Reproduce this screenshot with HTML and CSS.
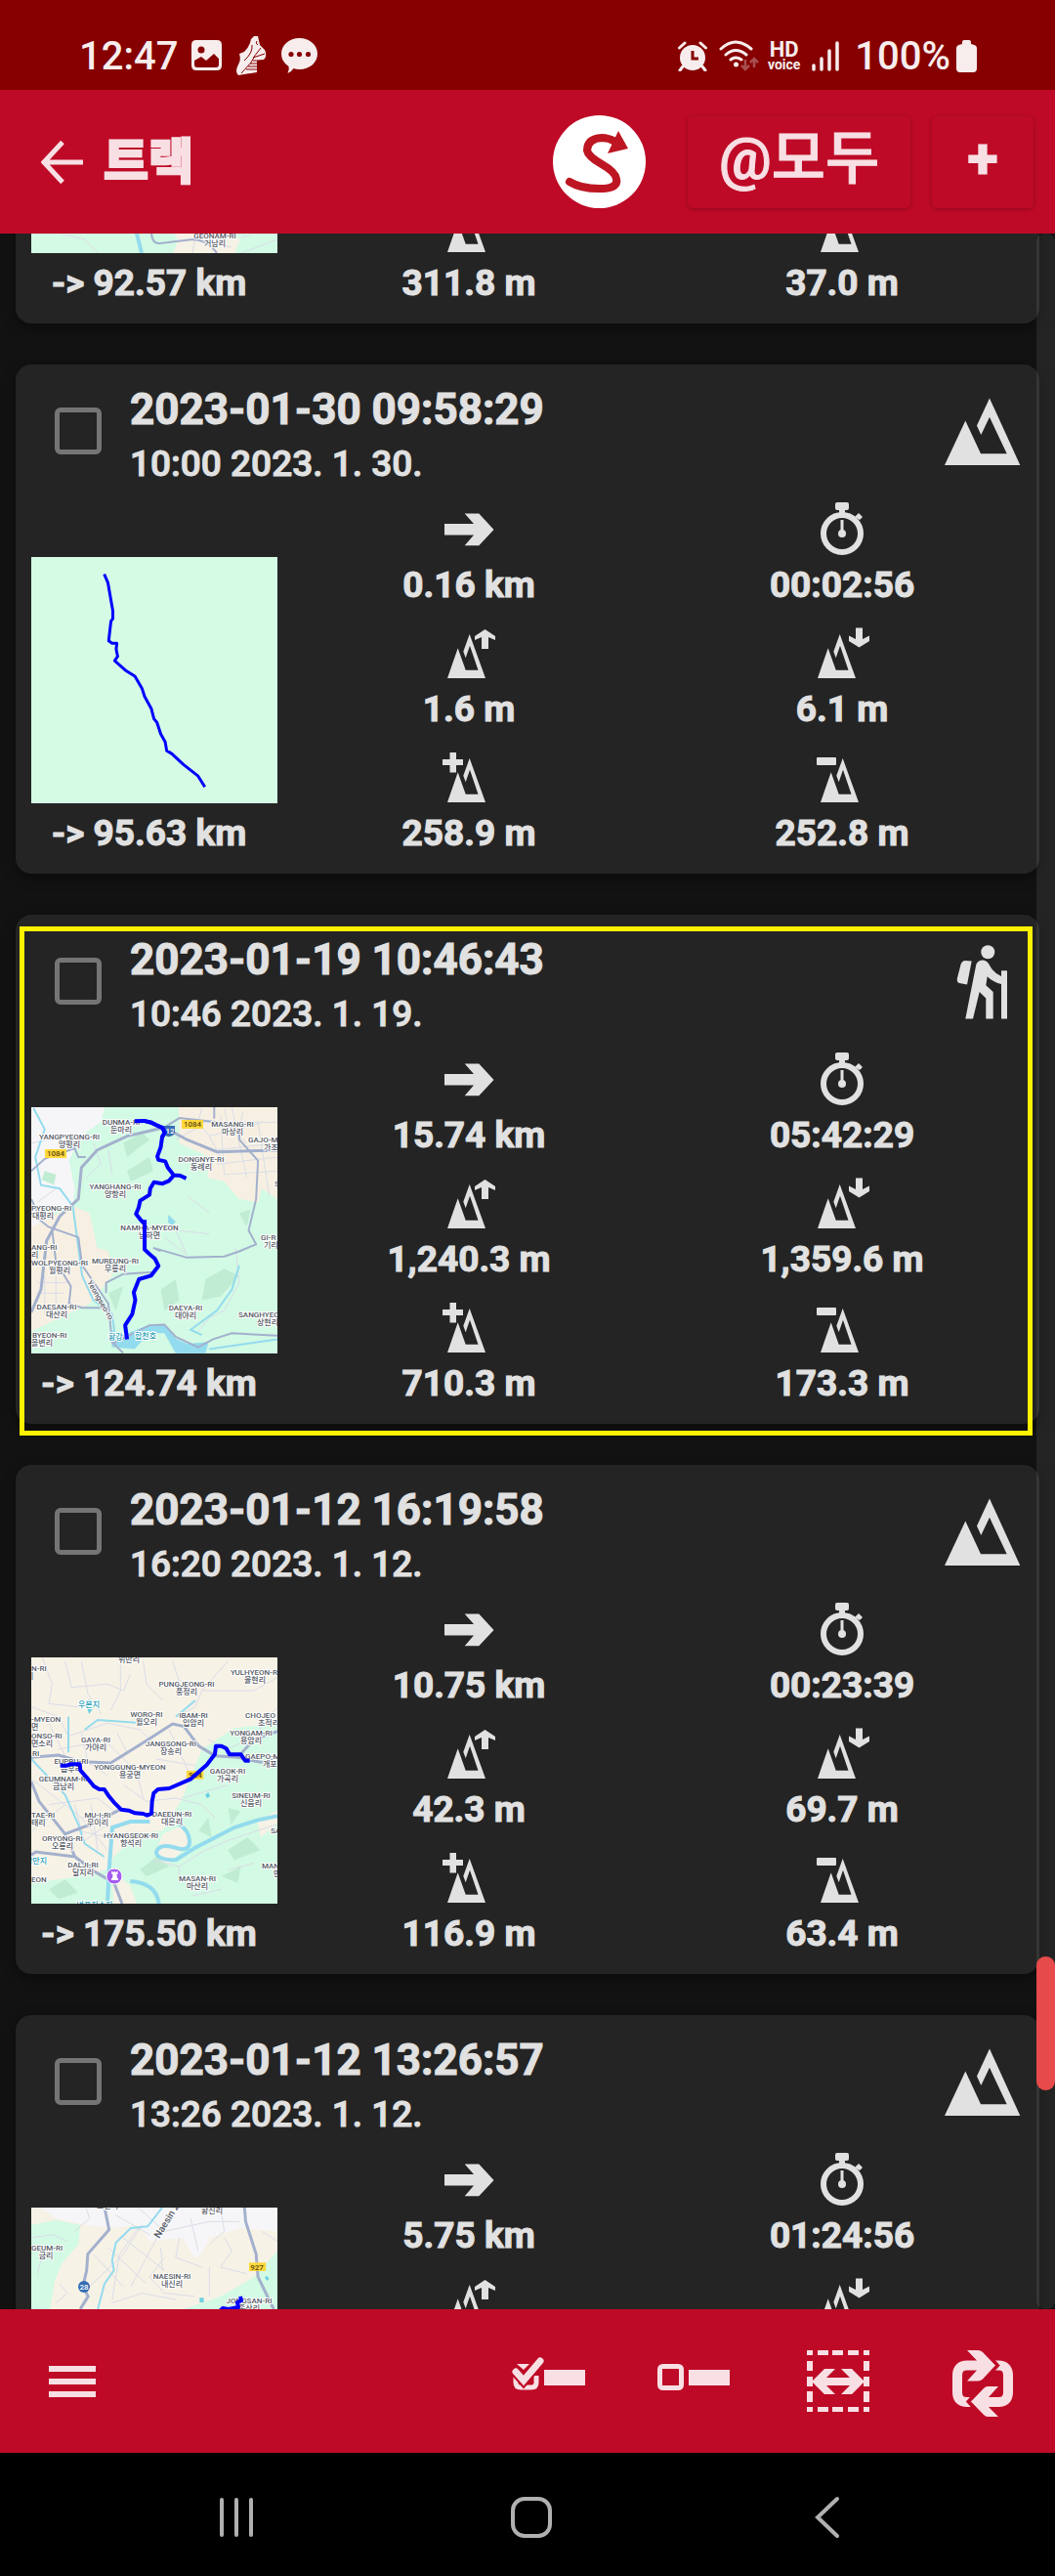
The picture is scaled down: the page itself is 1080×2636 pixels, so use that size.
FILE: index.html
```html
<!DOCTYPE html>
<html lang="ko">
<head>
  <meta charset="utf-8"/>
  <meta name="viewport" content="width=device-width, initial-scale=1"/>
  <title>트랙</title>
  <link rel="stylesheet" href="styles.css">
</head>
<body>

  <!-- ---------- SHARED ICONS ---------- -->
  <svg class="sprite" aria-hidden="true">
    <symbol id="i-distance" viewBox="0 0 64 64"><path d="M7 27H37L27.700 16.500H42.300L57.500 33L42.300 49.200H27.700L37 38.500H7Z"/></symbol>
    <symbol id="i-time" viewBox="0 0 64 64">
      <circle cx="32" cy="37" r="19" fill="none" stroke="currentColor" stroke-width="6"/>
      <rect x="25" y="5" width="14" height="8" rx="2"/><path d="M29 12h6v5h-6zM45 20l4-4 4 4-3 3z"/>
      <path d="M30.500 23h3v12h-3z"/><circle cx="32" cy="37" r="4"/>
    </symbol>
    <symbol id="i-hill" viewBox="0 0 64 64"><path d="M10 58L20.700 27.300L28.700 49.700H41.500L33 24.700L28.700 37.300L26.300 30.700L32.700 13L49 58Z"/></symbol>
    <symbol id="i-max" viewBox="0 0 64 64"><use href="#i-hill"/><path d="M48.500 8L59 15V19L52 16V28H45V16L38 19V15Z"/></symbol>
    <symbol id="i-min" viewBox="0 0 64 64"><use href="#i-hill" x="-3"/><path d="M49.500 26.500L39 20V14.500L46 18V6.500H53V18L60 14.500V20Z"/></symbol>
    <symbol id="i-gain" viewBox="0 0 64 64"><use href="#i-hill"/><path d="M12.500 7H19V14H26V20H19V27.500H12.500V20H5V14H12.500Z"/></symbol>
    <symbol id="i-loss" viewBox="0 0 64 64"><use href="#i-hill"/><rect x="6" y="12" width="20" height="8" rx="1"/></symbol>
    <symbol id="i-mountain" viewBox="0 0 80 80"><path d="M2 74L23.300 28.400L39 62.300H65.700L48 24.800L39.300 43L35 33.400L48 5.500L79.300 74Z"/></symbol>
    <symbol id="i-hiker" viewBox="0 0 80 80">
      <circle cx="46.300" cy="9.300" r="7"/>
      <path d="M23 18Q20 18 18.500 22L14.700 37Q14.500 40 17 41L25 42.500L29.700 18.500Z"/>
      <path d="M34.300 22Q36 17.500 41 17.500Q44.500 17.500 47 21Q52 31 60 34V28.200H66V77.500H60V42Q51 40 45.700 34.300L44.300 43.200L51.700 50V77.500H44.300V56.500L37.700 50L31 77.500H23.300Z"/>
    </symbol>
  </svg>

  <!-- ---------- STATUS BAR ---------- -->
  <div class="status-bar">
    <span class="clock">12:47</span>
    <svg class="status-icon" width="32" height="32" viewBox="0 0 32 32">
      <path fill-rule="evenodd" d="M5 0H26Q31 0 31 5V26Q31 31 26 31H5Q0 31 0 26V5Q0 0 5 0ZM10 6.500A3.500 3.500 0 1 0 10 13.500A3.500 3.500 0 1 0 10 6.500ZM3 21V25Q3 28 6 28H25Q28 28 28 25V19L23 14L15 21L10 17Z"/>
    </svg>
    <svg class="status-icon shoe" width="32" height="40" viewBox="0 0 32 40">
      <path d="M15 3L18 0H22L24 9L29 14Q32 20 28 24L21 25V37L2 40Q-2 36 2 29Q5 25 3 18L8 16Q14 10 15 3Z"/>
      <path class="cut" d="M16 9Q17 17 8 25M25 12Q18 20 15 27L5 38M17 22L29 18M17 25H27M14 28H22M12 31H22M10 34H22M21 5Q19 7 22 9"/>
    </svg>
    <svg class="status-icon" width="37" height="36" viewBox="0 0 37 36">
      <path d="M18.500 0C29 0 37 7 37 16S29 32 18.500 32Q15 32 12.500 31Q10 35 6.500 36Q8.500 32 7.500 29Q0 24 0 16C0 7 8 0 18.500 0Z"/>
      <g class="hole"><circle cx="10" cy="16.500" r="2.600"/><circle cx="18.500" cy="16.500" r="2.600"/><circle cx="27.500" cy="16.500" r="2.600"/></g>
    </svg>

    <div class="status-right">
      <svg class="status-icon" width="30" height="31" viewBox="0 0 30 31">
        <circle cx="15" cy="17" r="13"/><path d="M5 26L2 30M25 26L28 30M1.500 7L7 2M28.500 7L23 2" stroke="currentColor" stroke-width="3" stroke-linecap="round"/>
        <path class="cut thick" d="M15 10V18H21"/>
      </svg>
      <svg class="status-icon" width="42" height="32" viewBox="0 0 42 32">
        <path d="M2 9Q17 -5 33 9M7 15Q17 6 28 15M12 20Q17 16 23 20" fill="none" stroke="currentColor" stroke-width="3" stroke-linecap="round"/>
        <circle cx="17.500" cy="25" r="2.500"/>
        <path d="M27 20V30M23 26L27 30L31 26M36 28V19M32 23L36 19L40 23" fill="none" stroke="#a85050" stroke-width="2.500"/>
      </svg>
      <span class="hd"><b>HD</b><small>voice</small></span>
      <svg class="status-icon" width="28" height="31" viewBox="0 0 28 31">
        <path d="M2 25V29M10 18V29M18 10V29M26 2V29" stroke="currentColor" stroke-width="3.500" stroke-linecap="round"/>
      </svg>
      <span class="percent">100%</span>
      <svg class="status-icon" width="21" height="33" viewBox="0 0 21 33"><path d="M6 4V2Q6 0 8 0H13Q15 0 15 2V4Q21 5 21 8V29Q21 33 17 33H4Q0 33 0 29V8Q0 5 6 4Z"/></svg>
    </div>
  </div>

  <!-- ---------- TOP BAR ---------- -->
  <header class="top-bar">
    <button type="button" class="icon-btn back" aria-label="뒤로">
      <svg width="44" height="44" viewBox="0 0 44 44"><path d="M22 1.500L3 22L22 42.500M3 22H43" fill="none" stroke="currentColor" stroke-width="5"/></svg>
    </button>
    <h1>트랙</h1>
    <svg class="logo" viewBox="0 0 95 95">
      <circle cx="47.500" cy="47.500" r="47.500" fill="#fff"/>
      <path d="M17 68Q30 76 52 75Q67 74 65 65Q64 58 50 50Q36 42 35 36Q35 24 50 23Q57 23 64 27" fill="none" stroke="#bd1622" stroke-width="8" stroke-linecap="round"/>
      <path d="M67 16L77 34L56 39Z" fill="#bd1622"/>
    </svg>
    <button type="button" class="bar-btn filter">@모두</button>
    <button type="button" class="bar-btn add">+</button>
  </header>

  <!-- ---------- TRACK LIST ---------- -->
  <main class="track-area">
    <div class="track-list" id="trackList">

      <article class="card">
        <div class="card-head">
          <input type="checkbox" id="t1"/>
          <label for="t1"><strong>2023-01-30 10:04:12</strong><span>10:04 2023. 1. 30.</span></label>
          <svg class="activity"><use href="#i-mountain"/></svg>
        </div>
        <div class="card-body">
          <div class="preview">
            <svg class="map" viewBox="0 0 252 252">
              <rect width="252" height="252" fill="#d3fae4"/>
              <path d="M140 215Q160 232 190 228L214 238L208 252H145L150 240Z" fill="#f7f2e6"/>
              <path d="M20 230L55 238L68 252M170 225L165 252M180 240L205 246M215 236L240 228L252 235" class="lane"/>
              <path d="M105 220L113 252" class="water wide"/>
              <path d="M123 232Q124 243 132 242L165 238Q180 238 190 252" class="road"/>
              <path d="M215 252L252 238" class="lane"/>
              <g class="map-label"><text x="188" y="237">GEONAM-RI</text><text x="188" y="245">거남리</text></g>
            </svg>
            <p>-&gt; 92.57 km</p>
          </div>
          <ul class="stats">
            <li><svg><use href="#i-distance"/></svg>3.06 km</li>
            <li><svg><use href="#i-time"/></svg>00:12:40</li>
            <li><svg><use href="#i-max"/></svg>46.2 m</li>
            <li><svg><use href="#i-min"/></svg>21.4 m</li>
            <li><svg><use href="#i-gain"/></svg>311.8 m</li>
            <li><svg><use href="#i-loss"/></svg>37.0 m</li>
          </ul>
        </div>
      </article>

      <article class="card">
        <div class="card-head">
          <input type="checkbox" id="t2"/>
          <label for="t2"><strong>2023-01-30 09:58:29</strong><span>10:00 2023. 1. 30.</span></label>
          <svg class="activity"><use href="#i-mountain"/></svg>
        </div>
        <div class="card-body">
          <div class="preview">
            <svg class="map" viewBox="0 0 252 252">
              <rect width="252" height="252" fill="#d5fbe5"/>
              <g transform="scale(.383 .357) translate(-84 -588)">
                <path class="track thin" d="M279 637L289 662L302 742V765L297 772L291 828L300 835H313L311 852L315 873L307 885L335 912L361 930L380 965L387 988L405 1023L412 1052L420 1062L430 1095L442 1118L446 1143L460 1152L490 1182L530 1216L548 1247"/>
              </g>
            </svg>
            <p>-&gt; 95.63 km</p>
          </div>
          <ul class="stats">
            <li><svg><use href="#i-distance"/></svg>0.16 km</li>
            <li><svg><use href="#i-time"/></svg>00:02:56</li>
            <li><svg><use href="#i-max"/></svg>1.6 m</li>
            <li><svg><use href="#i-min"/></svg>6.1 m</li>
            <li><svg><use href="#i-gain"/></svg>258.9 m</li>
            <li><svg><use href="#i-loss"/></svg>252.8 m</li>
          </ul>
        </div>
      </article>

      <article class="card selected">
        <div class="card-head">
          <input type="checkbox" id="t3"/>
          <label for="t3"><strong>2023-01-19 10:46:43</strong><span>10:46 2023. 1. 19.</span></label>
          <svg class="activity"><use href="#i-hiker"/></svg>
        </div>
        <div class="card-body">
          <div class="preview">
            <svg class="map" viewBox="0 0 252 252">
              <rect width="252" height="252" fill="#d3fae4"/>
              <g transform="scale(.383 .357) translate(-84 -597)">
                <path fill="#f6f6f8" d="M84 597H280L270 640L215 680L185 750L200 830L195 880L140 900L84 960Z"/>
                <path fill="#f7f0e2" d="M478 597H742V860L700 830L690 870L640 860L600 810L555 800L560 740L480 700ZM195 880L240 900L260 1000L290 1010L300 1080L240 1160L84 1240V940Z"/>
                <path fill="#c0ecd3" d="M330 700L380 670L400 690L340 740ZM340 780L400 740L410 780L350 810ZM550 1090L600 1060L640 1080L590 1140L540 1150ZM430 1120L470 1090L480 1150L440 1180ZM120 780L150 790L145 820L112 805ZM290 1130L330 1110L310 1180ZM640 900L670 890L660 940Z"/>
                <path class="lane" d="M540 600L530 640L560 680L590 740M600 600L610 650L660 700M650 610L640 660M520 640H742M560 680L700 640M570 720L742 700M580 760L742 740M600 790L742 780M620 597L660 800M690 640L720 850M590 620L600 790M470 690L540 650M250 700L270 760L230 800M290 720L300 790M440 970L500 1020L470 950L560 960M500 850L560 900M630 1000L640 1100L600 1180L560 1200L530 1240M100 1100H180M110 1130H170M120 1080V1190M150 1080V1180M100 870L150 830M84 700L130 690"/>
                <path class="water" d="M90 600L120 660L95 740L110 820L160 830L195 880L205 960L220 1080L250 1150L300 1190L310 1270"/>
                <path class="water" d="M640 1050L620 1120L580 1180L510 1235L540 1250M742 1262L560 1290"/>
                <path fill="#93dbee" d="M295 1235L330 1250L400 1220L440 1218L470 1260L500 1275L558 1270L550 1302H470L440 1245L400 1245L360 1290L300 1285Z"/>
                <path fill="#93dbee" d="M450 905L470 925L462 935L450 928Z"/>
                <path class="road wide" d="M84 1185L110 1120L125 980L160 910L210 860L218 770L260 720L340 680L440 655L500 690L580 725L742 720"/>
                <path class="road" d="M440 655L480 628L580 640L640 660L640 690L690 750L685 860L665 950L685 990L640 1010L600 1025L500 1028L410 1000L430 1010M84 900L130 940L210 970L220 1050L290 1160L300 1270L330 1302M140 950L150 1040L190 1110L185 1160L220 1172L290 1172M284 1130V1100L330 1075L410 1070M84 780L120 745L200 715L210 740H230M84 860L110 920M300 1275L400 1222L440 1220L470 1255L530 1285L570 1262L620 1245L742 1252M573 597V630"/>
                <path class="track" d="M360 637L385 636L405 641L418 648L435 656L441 670L434 682L430 712L421 738L424 748L442 752L449 770L465 792L482 793L498 801M465 792L452 808L435 816L412 812L402 830L400 848L375 865L371 885L364 903L375 918L387 932V1005L400 1018L415 1032L424 1052L404 1080L372 1090L358 1128L362 1150L354 1190L335 1222L340 1262"/>
              </g>
              <path d="M136 19H147V27Q142 33 136 28Z" fill="#376db5"/>
              <rect x="154" y="13" width="22" height="9" fill="#ffd83b"/><rect x="14" y="43" width="22" height="9" fill="#ffd83b"/>
              <g class="map-label">
                <text x="92" y="18">DUNMA-RI</text><text x="92" y="26">둔마리</text>
                <text x="39" y="33">YANGPYEONG-RI</text><text x="39" y="41">양평리</text>
                <text x="206" y="20">MASANG-RI</text><text x="206" y="28">마상리</text>
                <text x="174" y="56">DONGNYE-RI</text><text x="174" y="64">동례리</text>
                <text x="86" y="84">YANGHANG-RI</text><text x="86" y="92">양항리</text>
                <text x="12" y="114">대평리</text>
                <text x="121" y="126">NAMHA-MYEON</text><text x="121" y="134">남하면</text>
                <text x="29" y="170">월평리</text>
                <text x="86" y="160">MUREUNG-RI</text><text x="86" y="168">무릉리</text>
                <text x="26" y="207">DAESAN-RI</text><text x="26" y="215">대산리</text>
                <text x="158" y="208">DAEYA-RI</text><text x="158" y="216">대야리</text>
              </g>
              <g class="map-label from-left">
                <text x="222" y="36">GAJO-M</text><text x="238" y="44">가조</text>
                <text x="0" y="106">PYEONG-RI</text>
                <text x="235" y="136">GI-R</text><text x="238" y="144">기리</text>
                <text x="0" y="146">ANG-RI</text><text x="0" y="154">리</text>
                <text x="0" y="162">WOLPYEONG-RI</text>
                <text x="212" y="215">SANGHYEO</text><text x="231" y="223">상현리</text>
                <text x="1" y="236">BYEON-RI</text><text x="0" y="244">을변리</text>
                <text x="57" y="179" transform="rotate(60 57 179)">Yeongseo-ro</text>
                <text x="249" y="81">S</text>
              </g>
              <g class="map-label from-left lake"><text x="79" y="238">황강</text><text x="106" y="237">합천호</text></g>
              <g class="map-sign"><text x="165" y="20">1084</text><text x="25" y="50">1084</text></g>
              <g class="map-sign light"><text x="142" y="27">12</text></g>
              <g transform="scale(.383 .357) translate(-84 -597)">
                <path class="track" d="M360 637L385 636L405 641L418 648L435 656L441 670L434 682M387 920V1005"/>
              </g>
            </svg>
            <p>-&gt; 124.74 km</p>
          </div>
          <ul class="stats">
            <li><svg><use href="#i-distance"/></svg>15.74 km</li>
            <li><svg><use href="#i-time"/></svg>05:42:29</li>
            <li><svg><use href="#i-max"/></svg>1,240.3 m</li>
            <li><svg><use href="#i-min"/></svg>1,359.6 m</li>
            <li><svg><use href="#i-gain"/></svg>710.3 m</li>
            <li><svg><use href="#i-loss"/></svg>173.3 m</li>
          </ul>
        </div>
      </article>

      <article class="card">
        <div class="card-head">
          <input type="checkbox" id="t4"/>
          <label for="t4"><strong>2023-01-12 16:19:58</strong><span>16:20 2023. 1. 12.</span></label>
          <svg class="activity"><use href="#i-mountain"/></svg>
        </div>
        <div class="card-body">
          <div class="preview">
            <svg class="map" viewBox="0 0 252 252">
              <rect width="252" height="252" fill="#f7f2e6"/>
              <g transform="scale(.3333) translate(-96 -48)">
                <path fill="#d3fae4" d="M852 250L720 265L620 330L560 480L500 580L420 590L350 660L330 700L210 725L96 740V804H852V560L800 600L790 550L852 520Z"/>
                <path fill="#f7f2e6" d="M480 640L500 590L570 560L580 620L520 680L480 670ZM340 700L400 750L420 804H350Z"/>
                <path fill="#c0ecd3" d="M610 580L640 540L650 600ZM700 640L760 600L800 640L720 670ZM430 700L480 660L520 690L450 720ZM150 760L200 730L240 770L180 790ZM680 720L740 690L730 740ZM700 510L740 520L710 560Z"/>
                <path class="lane" d="M130 48L160 130L150 190L240 200M200 60L220 140L330 130L380 150L400 100M250 60L270 160L310 220M370 60V150L340 210M440 60L450 130L500 180M530 60L550 120L640 130M852 110L780 150L620 150L600 200L540 230M96 200L180 230L210 290L330 250L430 270M150 250L200 350M250 280L270 370L330 410M360 280L390 340M430 270L470 310M320 300L420 400L440 480M96 420L250 540L330 640M150 500L300 480L350 520M230 500L260 620M280 500L300 640M250 540H340M240 580L330 600M260 610L330 560M380 440L450 490L540 480L620 500L660 540M640 300L700 330L780 290L852 200M560 480L700 440M100 580L200 500M470 670L550 690L630 640L700 610L852 560M550 690V740M590 780L680 760M700 700L780 680M620 150L700 60M180 330L290 310M480 360L600 380M520 270L580 400"/>
                <path class="water" d="M96 360L200 470L240 560L260 620L320 660M260 270L300 240L440 250M210 230V340M540 230L600 180"/>
                <path class="water wide" d="M330 804L335 700L345 570L400 552H460M400 735Q480 740 488 804M852 535L790 548L720 570L600 632L540 670Q480 670 480 645Q490 620 530 630Q585 650 582 610Q580 580 550 560"/>
                <path fill="#6ad0e2" d="M262 190L274 176L288 200L274 222ZM630 470L640 462L645 475L636 480Z"/>
                <path class="road wide" d="M96 355L180 348L250 368L340 372L440 310L530 252L565 260L610 320L660 350L730 355L780 300L852 275M730 355L800 370L852 360M96 430L120 490L200 590L280 560L370 515M200 590L230 660L110 645L96 655M230 660L290 705L350 740L375 804"/>
                <rect x="573" y="396" width="52" height="26" fill="#ffd83b"/>
              </g>
              <g class="map-label">
                <text x="100" y="5">위만리</text>
                <text x="229" y="26">율현리</text>
                <text x="159" y="30">PUNGJEONG-RI</text><text x="159" y="38">풍정리</text>
                <text x="118" y="61">WORO-RI</text><text x="118" y="69">월오리</text>
                <text x="166" y="62">IBAM-RI</text><text x="166" y="70">입암리</text>
                <text x="66" y="87">GAYA-RI</text><text x="66" y="95">가야리</text>
                <text x="143" y="91">JANGSONG-RI</text><text x="143" y="99">장송리</text>
                <text x="225" y="80">YONGAM-RI</text><text x="225" y="88">용암리</text>
                <text x="41" y="109">EUPBU-RI</text><text x="41" y="117">읍부리</text>
                <text x="101" y="115">YONGGUNG-MYEON</text><text x="101" y="123">용궁면</text>
                <text x="201" y="119">GAGOK-RI</text><text x="201" y="127">가곡리</text>
                <text x="33" y="127">GEUMNAM-RI</text><text x="33" y="135">금남리</text>
                <text x="225" y="144">SINEUM-RI</text><text x="225" y="152">신음리</text>
                <text x="68" y="164">MU-I-RI</text><text x="68" y="172">무이리</text>
                <text x="144" y="163">DAEEUN-RI</text><text x="144" y="171">대은리</text>
                <text x="32" y="188">ORYONG-RI</text><text x="32" y="196">오룡리</text>
                <text x="102" y="185">HYANGSEOK-RI</text><text x="102" y="193">향석리</text>
                <text x="53" y="215">DALJI-RI</text><text x="53" y="223">달지리</text>
                <text x="170" y="229">MASAN-RI</text><text x="170" y="237">마산리</text>
              </g>
              <g class="map-label from-left">
                <text x="0" y="14">N-RI</text><text x="-5" y="22">리</text>
                <text x="204" y="18">YULHYEON-R</text>
                <text x="219" y="62">CHOJEO</text><text x="232" y="70">초적리</text>
                <text x="0" y="66">-MYEON</text><text x="0" y="74">면</text>
                <text x="0" y="83">ONSO-RI</text><text x="0" y="91">면소리</text>
                <text x="1" y="101">RI</text>
                <text x="219" y="104">GAEPO-M</text><text x="237" y="112">개포</text>
                <text x="0" y="164">TAE-RI</text><text x="0" y="172">태리</text>
                <text x="245" y="180">SA</text>
                <text x="236" y="216">MAN</text><text x="248" y="224">만</text>
                <text x="0" y="230">EON</text>
              </g>
              <g class="map-label lake"><text x="59" y="51">우본지</text><text x="5" y="211">팔만지</text><text x="65" y="256">벼포지소지</text></g>
              <g class="map-sign"><text x="168" y="123">924</text></g>
              <circle cx="85" cy="224" r="8" fill="#a55cf0" stroke="#fff"/>
              <path d="M82 219h1.500v1h1v-1h1.500v1h1v-1h1.500v3h-1l.5 4h1v2h-7v-2h1l.5-4h-1z" fill="#fff"/>
              <g transform="scale(.3333) translate(-96 -48)">
                <path class="track" d="M185 380H205L215 376H245L247 395L265 415L288 443L305 453H320L335 475L350 493L372 515L395 518L415 526L440 528L452 533L465 528L467 490L472 465L485 453L520 450L585 422L610 400L635 378L660 345L663 320L680 320L695 328L705 346H740L753 365H767"/>
              </g>
            </svg>
            <p>-&gt; 175.50 km</p>
          </div>
          <ul class="stats">
            <li><svg><use href="#i-distance"/></svg>10.75 km</li>
            <li><svg><use href="#i-time"/></svg>00:23:39</li>
            <li><svg><use href="#i-max"/></svg>42.3 m</li>
            <li><svg><use href="#i-min"/></svg>69.7 m</li>
            <li><svg><use href="#i-gain"/></svg>116.9 m</li>
            <li><svg><use href="#i-loss"/></svg>63.4 m</li>
          </ul>
        </div>
      </article>

      <article class="card">
        <div class="card-head">
          <input type="checkbox" id="t5"/>
          <label for="t5"><strong>2023-01-12 13:26:57</strong><span>13:26 2023. 1. 12.</span></label>
          <svg class="activity"><use href="#i-mountain"/></svg>
        </div>
        <div class="card-body">
          <div class="preview">
            <svg class="map" viewBox="0 0 252 252">
              <rect width="252" height="252" fill="#f7f2e6"/>
              <g transform="scale(.383 .333) translate(-84 -57)">
                <path fill="#f6f6f8" d="M110 57H742V130L640 120L560 150L540 200L520 210L490 150L400 160L370 110L300 120L230 110L150 90Z"/>
                <path fill="#d3fae4" d="M84 110L150 95L215 110L210 170L165 230L145 290L135 369H84ZM742 190L680 270L590 330L490 369H742Z"/>
                <path class="lane" d="M250 200L330 300M290 180L390 290M330 150L440 250M370 120L320 200L300 340M420 150L350 300M430 180L435 250M240 300L330 200L380 110M200 130L240 90L230 57M310 80L400 140M370 57L440 130L560 100L640 100M480 150L470 210L540 240M510 90L530 190M600 150L620 190L590 240L660 260M440 210L400 270L440 320L520 330M300 350L380 320L470 340M560 240V330M160 290L180 320L150 350M84 150L140 140L180 160M700 130L742 160M590 57L600 130L560 170M110 220L100 260"/>
                <path class="water" d="M434 57L395 115L350 120L310 165L300 220L305 250L280 290L262 369"/>
                <path class="road wide" d="M280 57L292 125L235 200L232 250L222 300L236 330L215 369M654 57L657 100L685 200L690 270L732 369"/>
                <rect x="666" y="226" width="45" height="26" fill="#ffd83b"/>
                <path fill="#6ad0e2" d="M534 334H545V348H534ZM708 270L714 267L720 276L714 282Z"/>
              </g>
              <circle cx="54" cy="81" r="6" fill="#376db5"/>
              <g class="map-label">
                <text x="78" y="1">도진리</text><text x="185" y="6">황신리</text><text x="15" y="52">금리</text>
                <text x="144" y="73">NAESIN-RI</text><text x="144" y="81">내신리</text>
                <text x="223" y="98">JONGSAN-RI</text><text x="223" y="106">종산리</text>
              </g>
              <g class="map-label from-left"><text x="0" y="44">GEUM-RI</text><text class="street" x="131" y="32" transform="rotate(-58 131 32)">Naesin 2-gil</text></g>
              <g class="map-sign"><text x="231" y="64">927</text></g>
              <g class="map-sign light"><text x="54" y="84">28</text></g>
              <path class="track" d="M214 91L215 95L211 97L212 102L202 104L196 103L192 107L184 106L186 110"/>
            </svg>
            <p>-&gt; 164.75 km</p>
          </div>
          <ul class="stats">
            <li><svg><use href="#i-distance"/></svg>5.75 km</li>
            <li><svg><use href="#i-time"/></svg>01:24:56</li>
            <li><svg><use href="#i-max"/></svg>88.1 m</li>
            <li><svg><use href="#i-min"/></svg>94.6 m</li>
            <li><svg><use href="#i-gain"/></svg>151.2 m</li>
            <li><svg><use href="#i-loss"/></svg>62.8 m</li>
          </ul>
        </div>
      </article>

    </div>
    <div class="scroll-track"><div class="scroll-thumb"></div></div>
  </main>

  <!-- ---------- ACTION BAR ---------- -->
  <footer class="action-bar">
    <button type="button" class="icon-btn menu" aria-label="메뉴">
      <svg width="76" height="76" viewBox="0 0 76 76"><path d="M14 22H62V28H14ZM14 35H62V41H14ZM14 48H62V54H14Z"/></svg>
    </button>
    <button type="button" class="icon-btn" aria-label="모두 선택">
      <svg width="76" height="76" viewBox="0 0 76 76">
        <path d="M25 32V39Q25 44 20 44H9Q4 44 4 39V32" fill="none" stroke="currentColor" stroke-width="5"/>
        <path d="M5 20H18L12 26Z"/>
        <path d="M4 28L12 37L29 17" fill="none" class="halo" stroke-width="11"/>
        <path d="M4 28L12 37L29 17" fill="none" stroke="currentColor" stroke-width="7" stroke-linecap="round"/>
        <path d="M33 26H75V42H33Z"/>
      </svg>
    </button>
    <button type="button" class="icon-btn" aria-label="선택 해제">
      <svg width="76" height="76" viewBox="0 0 76 76"><rect x="3.500" y="22.500" width="22" height="22" rx="3" fill="none" stroke="currentColor" stroke-width="5"/><path d="M33 26H75V42H33Z"/></svg>
    </button>
    <button type="button" class="icon-btn" aria-label="범위 선택">
      <svg width="76" height="76" viewBox="0 0 76 76">
        <path d="M6 6H12V11H6ZM17 6H28V11H17ZM32 6H43V11H32ZM48 6H59V11H48ZM64 6H70V11H64ZM6 64H12V69H6ZM17 64H28V69H17ZM32 64H43V69H32ZM48 64H59V69H48ZM64 64H70V69H64ZM6 17H12V27H6ZM6 33H12V43H6ZM6 48H12V59H6ZM64 17H70V27H64ZM64 33H70V43H64ZM64 48H70V59H64Z"/>
        <path d="M11 38L24 25H35L26 34H50L41 25H52L65 38L52 51H41L50 42H26L35 51H24Z"/>
      </svg>
    </button>
    <button type="button" class="icon-btn" aria-label="동기화">
      <svg width="76" height="76" viewBox="0 0 76 76">
        <path class="loop" d="M27 59H22Q12 59 12 49V32Q12 21.500 22 21.500H36M49 21.500H54Q64 21.500 64 32V49Q64 59 54 59H40"/>
        <path class="halo" d="M38 5L53 21.500L38 38M38.500 42L23.500 58.500L38.500 75" fill="none" stroke-width="4"/>
        <path d="M22 6H33Q36 6 38 8L51 21.500L38 35.500Q36 37.500 33 37.500H22L32 26.500V16.500Z"/>
        <path d="M54 74H43Q41 74 39 72L26 58.500L39 45Q41 43 43 43H54L44 54V64Z"/>
      </svg>
    </button>
  </footer>

  <!-- ---------- SYSTEM NAVIGATION ---------- -->
  <nav class="system-nav">
    <button type="button" aria-label="최근 앱"><svg width="44" height="44" viewBox="0 0 44 44"><path d="M7 4V40M22 4V40M37 4V40"/></svg></button>
    <button type="button" aria-label="홈"><svg width="44" height="44" viewBox="0 0 44 44"><rect x="3" y="3" width="38" height="38" rx="12"/></svg></button>
    <button type="button" aria-label="이전"><svg width="44" height="44" viewBox="0 0 44 44"><path d="M33 3L13 22L33 41"/></svg></button>
  </nav>

  <script>
    // Open the list part of the way down, with the first card mostly scrolled past
    document.getElementById('trackList').scrollTop = 429;
  </script>
</body>
</html>
```

FILE: styles.css
```css
/* Basic reset */
* {
  box-sizing: border-box;
  margin: 0;
  padding: 0;
}
body {
  display: flex;
  flex-direction: column;
  height: 100vh;
  overflow: hidden;
  background: #121212;
  color: #e1e1e1;
  font-family: Roboto, "Noto Sans CJK KR", sans-serif;
  font-size: 37px;
  line-height: 43px;
}
button {
  border: none;
  background: none;
  color: inherit;
  font-family: inherit;
  cursor: pointer;
}
svg {
  display: block;
  flex: none;
  fill: currentColor;
}
.sprite {
  position: absolute;
  width: 0;
  height: 0;
}

/* ---------- STATUS BAR ---------- */
.status-bar {
  display: flex;
  align-items: center;
  gap: 14px;
  padding: 22px 80px 0 81px;
  height: 92px;
  flex: none;
  background: #860000;
  color: #f7eded;
  font-size: 40px;
  font-weight: 500;
}
.status-right {
  display: flex;
  align-items: center;
  gap: 12px;
  margin-left: auto;
}
.percent {
  margin: 0 -6px 0 4px;
}
.hd {
  display: flex;
  flex-direction: column;
  align-items: center;
  margin-left: -4px;
  font-size: 22px;
  line-height: 18px;
}
.hd small {
  font-size: 14px;
  line-height: 13px;
  font-weight: 700;
}
.cut {
  fill: none;
  stroke: #860000;
  stroke-width: 1;
}
.cut.thick {
  stroke-width: 3;
}
.hole {
  fill: #860000;
}

/* ---------- TOP BAR ---------- */
.top-bar {
  display: flex;
  align-items: center;
  flex: none;
  height: 147px;
  padding: 0 22px 0 42px;
  background: #be0a26;
  color: #f8dfe4;
}
.top-bar h1 {
  margin-left: 20px;
  font-size: 50px;
  line-height: 60px;
  font-weight: 900;
  -webkit-text-stroke: 2px;
}
.logo {
  width: 95px;
  height: 95px;
  margin: 0 43px 0 auto;
}
.bar-btn {
  height: 94px;
  padding-bottom: 6px;
  border-radius: 5px;
  box-shadow: 0 1px 4px rgba(0, 0, 0, 0.25);
  font-size: 60px;
  line-height: 70px;
}
.filter {
  width: 228px;
  margin-right: 22px;
  font-weight: 500;
  -webkit-text-stroke: 1px;
}
.add {
  width: 104px;
  font-weight: 900;
}

/* ---------- TRACK LIST ---------- */
.track-area {
  position: relative;
  flex: 1;
  min-height: 0;
}
.track-list {
  display: flex;
  flex-direction: column;
  gap: 42px;
  height: 100%;
  padding: 0 16px;
  overflow-y: auto;
  scrollbar-width: none;
}
.card {
  position: relative;
  flex: none;
  padding: 20px 11px 20px 0;
  border-radius: 16px;
  background: #242424;
  box-shadow: 0 4px 14px rgba(0, 0, 0, 0.4);
  -webkit-text-stroke: 1px;
}
/* Highlight frame sits a little below the card it marks */
.card.selected::after {
  content: "";
  position: absolute;
  inset: 12px 7px -12px 4px;
  border: 5px solid #fff200;
}
.card-head {
  display: flex;
  align-items: flex-start;
  padding: 0 8px 0 40px;
}
.card-head input {
  appearance: none;
  width: 48px;
  height: 48px;
  margin-top: 24px;
  border: 5px solid #757575;
  border-radius: 6px;
}
.card-head label {
  display: flex;
  flex-direction: column;
  gap: 8px;
  margin-left: 29px;
  font-weight: 500;
}
.card-head strong {
  font-size: 44px;
  line-height: 52px;
  font-weight: 700;
}
.activity {
  width: 80px;
  height: 80px;
  margin: 9px 0 0 auto;
}
.card-body {
  display: flex;
  align-items: flex-end;
  margin-top: 13px;
  font-weight: 700;
  text-align: center;
}
.preview {
  display: flex;
  flex-direction: column;
  gap: 9px;
  width: 273px;
}
.map {
  width: 252px;
  height: 252px;
  margin-left: 16px;
}
.stats {
  display: grid;
  flex: 1;
  grid-template-columns: 1fr 1fr;
  row-gap: 16px;
  list-style: none;
}
.stats svg {
  width: 64px;
  height: 64px;
  margin: 0 auto 4px;
}

/* ---------- MAP PREVIEWS ---------- */
.lane,
.water,
.road,
.track {
  fill: none;
  vector-effect: non-scaling-stroke;
}
.lane {
  stroke: #d9dde8;
  stroke-width: 1;
}
.water {
  stroke: #93dbee;
  stroke-width: 2;
}
.water.wide {
  stroke-width: 4;
}
.road {
  stroke: #a3b0cd;
  stroke-width: 2;
}
.road.wide {
  stroke-width: 3;
}
.track {
  stroke: #0000ff;
  stroke-width: 4;
  stroke-linejoin: round;
}
.track.thin {
  stroke-width: 3;
}
.map-label {
  fill: #565b66;
  stroke: #fff;
  stroke-width: 2;
  stroke-linejoin: round;
  paint-order: stroke;
  font-size: 8px;
  font-weight: 500;
  text-anchor: middle;
}
.map-label.from-left {
  text-anchor: start;
}
.map-label.lake {
  fill: #2a9fb5;
}
.map-label .street {
  font-size: 10px;
}
.map-sign {
  fill: #5b4a10;
  font-size: 8px;
  font-weight: 500;
  text-anchor: middle;
}
.map-sign.light {
  fill: #fff;
}

/* ---------- SCROLL INDICATOR ---------- */
.scroll-track {
  position: absolute;
  top: 0;
  right: 0;
  bottom: 0;
  width: 19px;
  border-radius: 8px;
  background: rgba(255, 255, 255, 0.08);
}
.scroll-thumb {
  position: absolute;
  top: 83%;
  width: 100%;
  height: 137px;
  border-radius: 9px;
  background: #e64a4a;
}

/* ---------- ACTION BAR ---------- */
.action-bar {
  display: flex;
  flex: none;
  height: 147px;
  background: #be0a26;
  color: #f8dfe4;
}
.action-bar .icon-btn {
  display: flex;
  align-items: center;
  justify-content: center;
  width: 148px;
}
.action-bar .menu {
  margin-right: auto;
}
.halo {
  stroke: #be0a26;
}
.loop {
  fill: none;
  stroke: currentColor;
  stroke-width: 10;
}

/* ---------- SYSTEM NAVIGATION ---------- */
.system-nav {
  display: flex;
  flex: none;
  height: 126px;
  padding: 6px 83px 0 91px;
  background: #000;
  color: #b0b0b0;
}
.system-nav button {
  display: flex;
  flex: 1;
  align-items: center;
  justify-content: center;
}
.system-nav svg {
  fill: none;
  stroke: currentColor;
  stroke-width: 4;
  stroke-linecap: round;
}
```
